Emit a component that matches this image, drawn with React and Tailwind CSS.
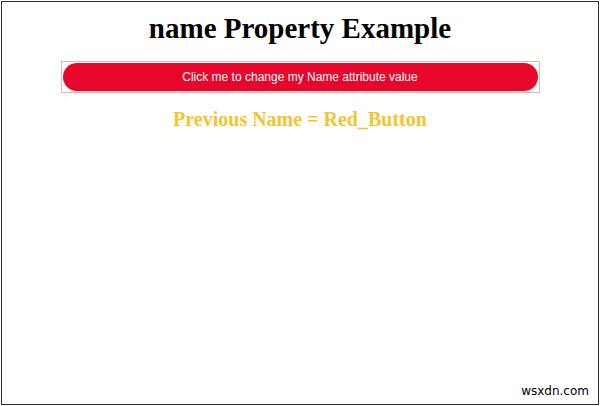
import React from 'react';

const App = () => {
  return (
    <div className="w-[600px] h-[406px] bg-white p-px">
      <div className="relative h-full border border-[#2e2e2e] bg-white flex flex-col items-center">
        {/* Heading */}
        <h1 className="mt-[9px] text-[29px] leading-[34px] font-bold text-black font-['Liberation_Serif',serif]">
          name Property Example
        </h1>

        {/* Button with focus outline */}
        <div className="mt-[16px] w-[479px] border border-[#e6b8a8] p-px">
          <button className="w-full h-[28px] rounded-full bg-[#e8062a] text-white text-[12px] font-['Liberation_Sans',Arial,sans-serif]">
            Click me to change my Name attribute value
          </button>
        </div>

        <p className="mt-[14px] text-[20px] leading-[24px] font-bold text-[#f2c531] font-['Liberation_Serif',serif]">
          Previous Name = Red_Button
        </p>

        {/* Watermark */}
        <span className="absolute right-[9px] bottom-[4px] text-[12px] text-black font-['DejaVu_Sans',sans-serif]">
          wsxdn.com
        </span>
      </div>
    </div>
  );
};

export default App;
